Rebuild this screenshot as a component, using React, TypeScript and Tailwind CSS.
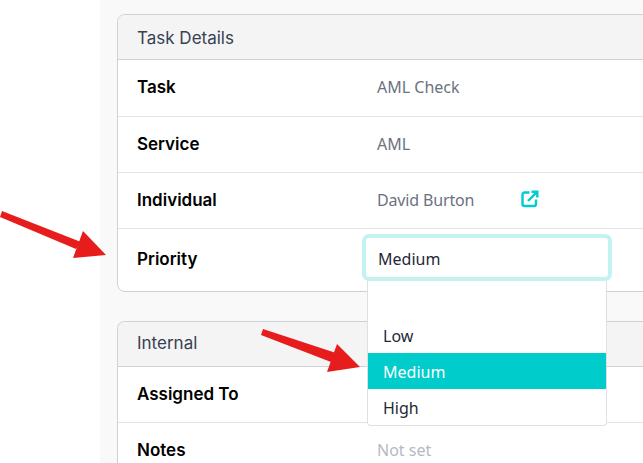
const labelClass = "w-[240px] shrink-0 text-[17px] font-semibold text-black";
const valueClass = "pb-[2px] font-['Noto_Sans',sans-serif] text-[16px] text-[#6b7280]";

function Row({ label, children, height = "h-[56px]" }: { label: string; children?: React.ReactNode; height?: string }) {
  return (
    <div className={`flex items-center border-b border-[#e2e3ea] pl-[19px] ${height}`}>
      <div className={labelClass}>{label}</div>
      {children}
    </div>
  );
}

function CardHeader({ title, className = "" }: { title: string; className?: string }) {
  return (
    <div className={`flex h-[45px] items-center border-b border-[#d0d1d4] bg-[#f4f4f5] pl-[19px] text-[17px] text-[#374151] ${className}`}>
      {title}
    </div>
  );
}

// external link glyph next to the individual's name
function LinkIcon() {
  return (
    <svg className="mb-[3px] ml-[47px] h-[18px] w-[18px] text-[#00cccc]" viewBox="0 0 18 18" fill="none" stroke="currentColor" strokeWidth={2.4}>
      <path d="M8.5 2.5H3.5a2 2 0 0 0-2 2V14a2 2 0 0 0 2 2H13a2 2 0 0 0 2-2V9.5" />
      <path d="M7 11 16 2" />
      <path d="M10.5 1.7H16.3V7.5" />
    </svg>
  );
}

export default function App() {
  return (
    <div className="flex h-[463px] w-[643px] overflow-hidden bg-white font-['Inter',sans-serif]">
      <div className="w-[100px] shrink-0" />
      <div className="relative flex-1 bg-[#f9f9fa] pl-[17px] pt-[14px]">
        <div className="w-[600px] rounded-[8px] border border-[#d0d1d4] bg-white">
          <div className="overflow-hidden rounded-t-[8px]">
            <CardHeader title="Task Details" className="pt-[3px]" />
          </div>
          <Row label="Task" height="h-[57px]">
            <span className={valueClass}>AML Check</span>
          </Row>
          <Row label="Service">
            <span className={valueClass}>AML</span>
          </Row>
          <Row label="Individual">
            <span className={`${valueClass} tracking-[-0.15px]`}>David Burton</span>
            <LinkIcon />
          </Row>
          <div className="flex h-[62px] items-start pl-[19px] pt-[5px]">
            <div className="mt-[2px] flex h-[47px] w-[225px] shrink-0 items-center text-[17px] font-semibold text-black">Priority</div>
            <div className="relative">
              <div className="flex h-[47px] w-[250px] items-center rounded-[7px] border-[4px] border-[#c2f2f2] bg-white pl-[12px] pt-[3px] font-['Noto_Sans',sans-serif] text-[16px] text-[#1f2937]">
                Medium
              </div>
              <div className="absolute left-[5px] top-[47px] z-10 w-[240px] rounded-b-[4px] border-x border-b border-[#dfe0e6] bg-white pt-[36px] font-['Noto_Sans',sans-serif] text-[16px] text-[#1f2937]">
                <div className="flex h-[36px] items-center pl-[15px] pt-[2px]">Low</div>
                <div className="flex h-[36px] items-center bg-[#00cccc] pl-[15px] pt-[2px] text-white">Medium</div>
                <div className="flex h-[36px] items-center pl-[15px] pt-[2px]">High</div>
              </div>
            </div>
          </div>
        </div>
        <div className="mt-[29px] w-[600px] rounded-t-[8px] border-x border-t border-[#d0d1d4] bg-white">
          <div className="overflow-hidden rounded-t-[8px]">
            <CardHeader title="Internal" />
          </div>
          <Row label="Assigned To" />
          <Row label="Notes">
            <span className="pb-[2px] font-['Noto_Sans',sans-serif] text-[16px] text-[#b4bac4]">Not set</span>
          </Row>
        </div>
        {/* annotation arrows, in page coordinates */}
        <svg className="pointer-events-none absolute left-[-100px] top-0 z-20 h-[463px] w-[643px]" viewBox="0 0 643 463" fill="#e71d1d">
          <polygon points="2,211 0,217 76,249 81,242" />
          <polygon points="83,231 106,255 73,258" />
          <polygon points="263,329 261,335 331,362 336,353" />
          <polygon points="337,344 360,367 327,372" />
        </svg>
      </div>
    </div>
  );
}
